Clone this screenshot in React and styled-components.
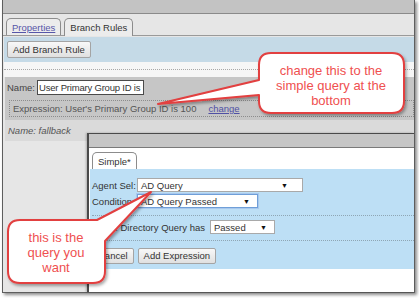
import React from 'react'
import styled, { createGlobalStyle } from 'styled-components'

const GlobalStyle = createGlobalStyle`
  html, body {
    margin: 0;
    padding: 0;
    background: #fff;
  }
  body {
    font-family: "Liberation Sans", Arial, sans-serif;
    font-size: 9.5px;
    color: #333;
  }
`

const Page = styled.div`
  position: relative;
  width: 419px;
  height: 298px;
  overflow: hidden;
  background: #fff;
`

const Frame = styled.div`
  position: relative;
  margin-left: 2px;
  width: 411px;
  height: 292px;
  border: 1px solid #5e5e5e;
  border-top: none;
  box-shadow: 2px 2px 3px rgba(0, 0, 0, 0.45);
  background: #e6e6e6;
  display: flex;
  flex-direction: column;
`

const TopBar = styled.div`
  height: 13px;
  flex-shrink: 0;
  background: #c3c3c3;
  border-bottom: 1px solid #8a8a8a;
`

const TabStrip = styled.div`
  height: 21px;
  flex-shrink: 0;
  display: flex;
  align-items: flex-end;
  gap: 3px;
  padding-left: ${p => p.$inset || 3}px;
  background: ${p => p.$bg || '#e6e6e6'};
  border-bottom: ${p => (p.$line ? '1px solid #9a9a9a' : 'none')};
`

const Tab = styled.div`
  height: 16px;
  display: flex;
  align-items: center;
  padding: 0 5px;
  border: 1px solid #8c8c8c;
  border-bottom: none;
  border-radius: 5px 5px 0 0;
  background: ${p => p.$bg || '#ececec'};
  margin-bottom: ${p => (p.$active ? '-1px' : '0')};
  padding-bottom: ${p => (p.$active ? '1px' : '0')};
  color: #333;
  font-size: 9.5px;
`

const TabLink = styled.span`
  color: #5656a8;
  text-decoration: underline;
`

const Body = styled.div`
  flex: 1;
  display: flex;
  flex-direction: column;
  padding: 1px 0 0 1px;
`

const Toolbar = styled.div`
  height: 25px;
  display: flex;
  align-items: center;
  padding-left: 3px;
  background: #c5dae7;
`

const Button = styled.button`
  height: ${p => p.$h || 16}px;
  padding: 0 5px;
  border: 1px solid #a4a4a4;
  border-radius: 2px;
  background: linear-gradient(#f8f8f8, #e0e0e0);
  font-family: "Liberation Sans", Arial, sans-serif;
  font-size: 9.5px;
  color: #333;
  line-height: 1;
`

const Separator = styled.div`
  height: 15px;
  display: flex;
  align-items: center;
  background: #f6f6f6;
  &::after {
    content: '';
    flex: 1;
    border-top: 1px dotted #a8a8a8;
  }
`

const RuleBlock = styled.div`
  margin-left: 1px;
  height: 43px;
  box-sizing: border-box;
  padding: 2px 0 3px 2px;
  background: #c6c6c6;
`

const NameRow = styled.div`
  height: 17px;
  display: flex;
  align-items: center;
  gap: 2px;
  color: #444;
`

const TextInput = styled.div`
  width: 107px;
  height: 15px;
  box-sizing: border-box;
  display: flex;
  align-items: center;
  padding: 0 1px;
  border: 1px solid #4a4a4a;
  background: #fff;
  color: #333;
  letter-spacing: -0.2px;
  white-space: nowrap;
  overflow: hidden;
`

const ExprBox = styled.div`
  margin: 4px 0 0 2px;
  height: 17px;
  box-sizing: border-box;
  display: flex;
  align-items: center;
  gap: 12px;
  padding-left: 3px;
  border: 1px dotted #8c8c8c;
  color: #555;
`

const Link = styled.span`
  color: #5050a4;
  text-decoration: underline;
`

const FallbackRow = styled.div`
  margin-left: 1px;
  height: 21px;
  display: flex;
  align-items: center;
  padding-left: 3px;
  background: #dadada;
  color: #555;
  font-style: italic;
`

const Dialog = styled.div`
  position: absolute;
  left: 84px;
  top: 133px;
  right: 0;
  bottom: 0;
  display: flex;
  flex-direction: column;
  background: #fff;
  border-left: 2px solid #4a4a4a;
  border-top: 1px solid #4a4a4a;
  box-shadow: -1px 0 2px rgba(0, 0, 0, 0.25);
`

const TitleBar = styled.div`
  height: 13px;
  background: #c6c6c6;
  border-bottom: 1px solid #7a7a7a;
`

const Panel = styled.div`
  margin-left: 1px;
  height: 100px;
  box-sizing: border-box;
  padding: 9px 0 0 2px;
  background: #bddff5;
`

const FieldRow = styled.div`
  height: 14px;
  display: flex;
  align-items: center;
  gap: ${p => p.$gap || 0}px;
  margin-top: ${p => p.$top || 0}px;
  color: #333;
`

const Label = styled.span`
  width: ${p => (p.$w ? `${p.$w}px` : 'auto')};
  white-space: nowrap;
`

const Select = styled.div`
  width: ${p => p.$w}px;
  height: 14px;
  box-sizing: border-box;
  display: flex;
  align-items: center;
  justify-content: space-between;
  padding: 0 ${p => p.$arrow || 8}px 0 3px;
  background: #fff;
  border: 1px solid ${p => (p.$focus ? '#6f9fd8' : '#a9a9a9')};
  box-shadow: ${p => (p.$focus ? '0 0 0 1px #a9c8ee' : 'none')};
  color: #333;
`

const Arrow = styled.span`
  font-size: 7px;
  color: #111;
`

const Divider = styled.div`
  margin-top: ${p => p.$top}px;
  border-top: 1px dotted #8fa6b4;
`

const ButtonRow = styled.div`
  margin-top: 7px;
  display: flex;
  gap: 4px;
`

const Overlay = styled.svg`
  position: absolute;
  left: 0;
  top: 0;
  pointer-events: none;
`

const calloutText = {
  fontFamily: '"Liberation Sans", Arial, sans-serif',
  fontSize: 13,
  fill: '#ef5050',
  textAnchor: 'middle',
}

function Callouts() {
  return (
    <Overlay width="419" height="298" viewBox="0 0 419 298">
      <defs>
        <filter id="sh" x="-20%" y="-20%" width="140%" height="140%">
          <feDropShadow dx="1.5" dy="2" stdDeviation="1.5" floodColor="#000" floodOpacity="0.35" />
        </filter>
      </defs>
      <path
        d="M271 53 H392 Q404 53 404 65 V101 Q404 113 392 113 H271 Q259 113 259 101 V95 L158 104 L259 80 V65 Q259 53 271 53 Z"
        fill="#fff"
        stroke="#e23f3f"
        strokeWidth="2"
        strokeLinejoin="round"
        filter="url(#sh)"
      />
      <text x="331" y="75" style={calloutText}>change this to the</text>
      <text x="331" y="90" style={calloutText}>simple query at the</text>
      <text x="331" y="105" style={calloutText}>bottom</text>
      <path
        d="M20 220 H97 L151 192 L105 241 V271 Q105 283 93 283 H20 Q8 283 8 271 V232 Q8 220 20 220 Z"
        fill="#fff"
        stroke="#e23f3f"
        strokeWidth="2"
        strokeLinejoin="round"
        filter="url(#sh)"
      />
      <text x="56" y="242" style={calloutText}>this is the</text>
      <text x="56" y="257" style={calloutText}>query you</text>
      <text x="56" y="272" style={calloutText}>want</text>
    </Overlay>
  )
}

export default function App() {
  return (
    <Page>
      <GlobalStyle />
      <Frame>
        <TopBar />
        <TabStrip $line>
          <Tab>
            <TabLink>Properties</TabLink>
          </Tab>
          <Tab $active>Branch Rules</Tab>
        </TabStrip>
        <Body>
          <Toolbar>
            <Button $h={17}>Add Branch Rule</Button>
          </Toolbar>
          <Separator />
          <RuleBlock>
            <NameRow>
              Name:
              <TextInput>User Primary Group ID is</TextInput>
            </NameRow>
            <ExprBox>
              <span>Expression: User's Primary Group ID is 100</span>
              <Link>change</Link>
            </ExprBox>
          </RuleBlock>
          <FallbackRow>Name: fallback</FallbackRow>
        </Body>

        <Dialog>
          <TitleBar />
          <TabStrip $bg="#fff" $inset={3}>
            <Tab $bg="#fff">Simple*</Tab>
          </TabStrip>
          <Panel>
            <FieldRow $gap={2}>
              <Label $w={43}>Agent Sel:</Label>
              <Select $w={166} $arrow={14}>
                AD Query
                <Arrow>▼</Arrow>
              </Select>
            </FieldRow>
            <FieldRow $gap={2} $top={2}>
              <Label $w={43}>Condition:</Label>
              <Select $w={121} $arrow={7} $focus>
                AD Query Passed
                <Arrow>▼</Arrow>
              </Select>
            </FieldRow>
            <Divider $top={7} />
            <FieldRow $gap={5} $top={4}>
              <Label>Active Directory Query has</Label>
              <Select $w={65} $arrow={7}>
                Passed
                <Arrow>▼</Arrow>
              </Select>
            </FieldRow>
            <Divider $top={6} />
            <ButtonRow>
              <Button>Cancel</Button>
              <Button>Add Expression</Button>
            </ButtonRow>
          </Panel>
        </Dialog>
      </Frame>
      <Callouts />
    </Page>
  )
}
